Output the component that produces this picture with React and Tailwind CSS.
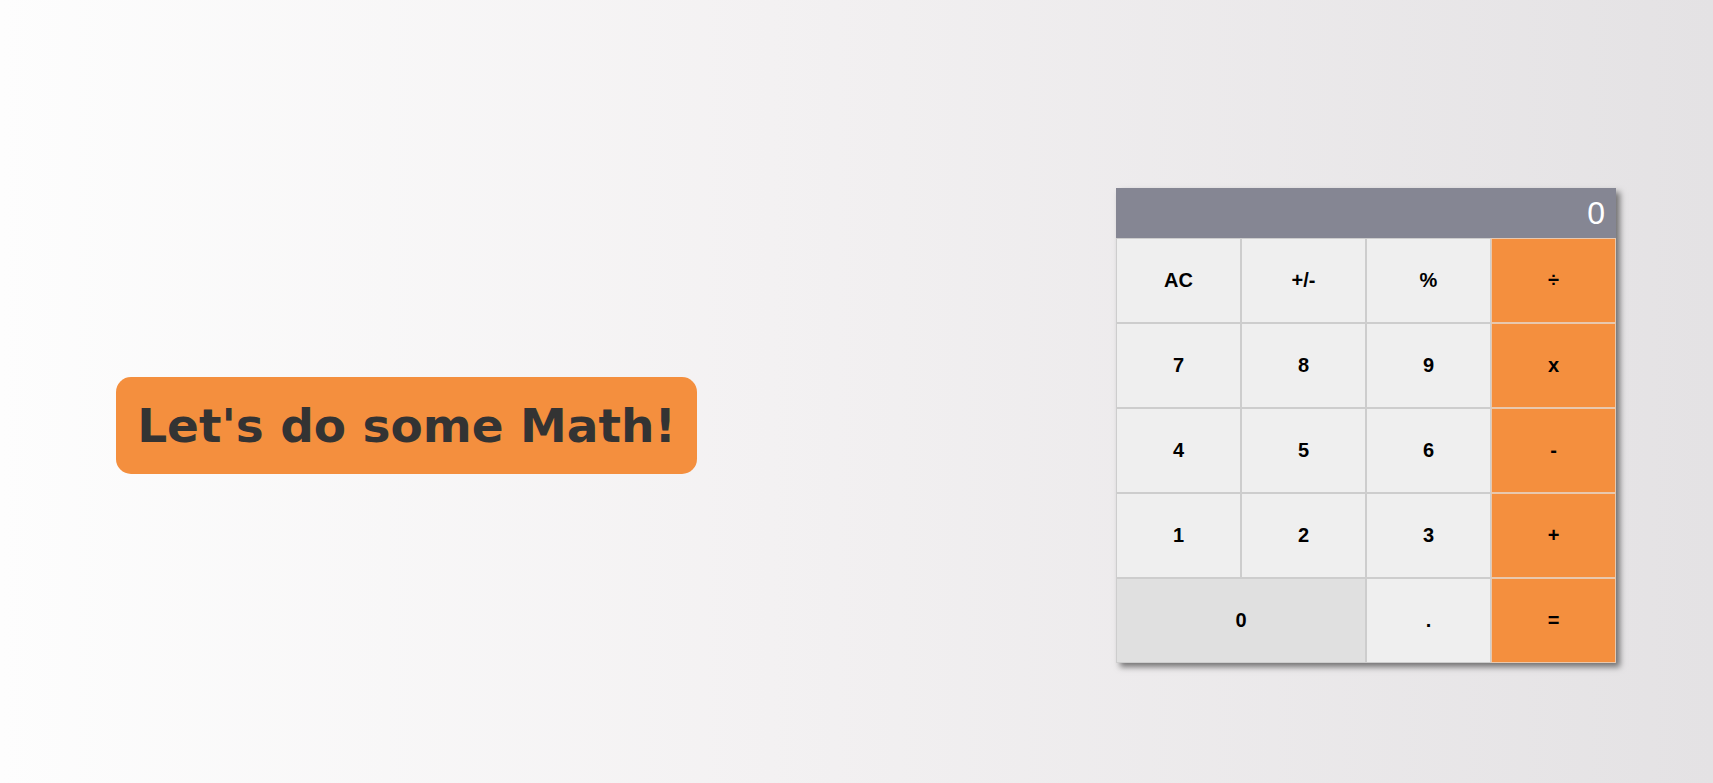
const keys = [
  { label: 'AC' },
  { label: '+/-' },
  { label: '%' },
  { label: '÷', op: true },
  { label: '7' },
  { label: '8' },
  { label: '9' },
  { label: 'x', op: true },
  { label: '4' },
  { label: '5' },
  { label: '6' },
  { label: '-', op: true },
  { label: '1' },
  { label: '2' },
  { label: '3' },
  { label: '+', op: true },
  { label: '0', wide: true },
  { label: '.' },
  { label: '=', op: true },
];

const Key = ({ label, op, wide }) => {
  let cls = 'bg-[#efefef] border-[#cdcdcd]';
  if (op) cls = 'bg-[#f48f3e] border-[#e8c8ae]';
  if (wide) cls = 'col-span-2 bg-[#e0e0e0] border-[#cdcdcd]';
  return (
    <button
      className={`h-[85px] border flex items-center justify-center text-[20px] font-bold text-black font-['Liberation_Sans',Arial,sans-serif] ${cls}`}
    >
      {label}
    </button>
  );
};

const App = () => {
  return (
    <div className="h-[783px] w-full overflow-hidden bg-[linear-gradient(to_right,#fdfdfd,#f3f1f2_45%,#e4e2e4)] flex items-center justify-between pt-[67px] pl-[116px] pr-[97px]">
      {/* Title */}
      <div className="h-[97px] w-[581px] rounded-[15px] bg-[#f48f3e] flex items-center justify-center">
        <h1 className="text-[47px] leading-none font-bold text-[#333333] font-['DejaVu_Sans',Verdana,sans-serif]">
          Let's do some Math!
        </h1>
      </div>

      {/* Calculator */}
      <div className="w-[500px] shadow-[4px_4px_6px_rgba(0,0,0,0.5)]">
        <div className="h-[50px] bg-[#858693] flex items-center justify-end pr-[11px] text-white text-[32px] font-['Liberation_Sans',Arial,sans-serif]">
          0
        </div>
        <div className="grid grid-cols-4">
          {keys.map((k) => (
            <Key key={k.label} {...k} />
          ))}
        </div>
      </div>
    </div>
  );
};

export default App;
